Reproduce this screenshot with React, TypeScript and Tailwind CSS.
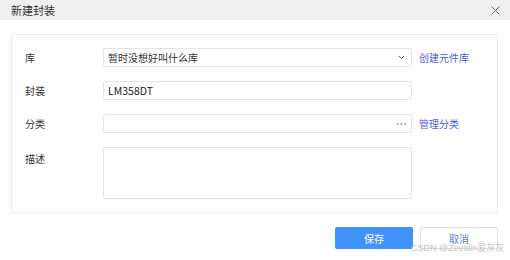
import React from 'react';

const font = { fontFamily: '"Noto Sans CJK SC", "Open Sans", sans-serif' };

const Row: React.FC<{ label: string; children: React.ReactNode; extra?: React.ReactNode; top?: boolean }> = ({ label, children, extra, top }) => (
    <div className={`flex ${top ? 'items-start' : 'items-center'}`}>
        <div className={`w-[78px] shrink-0 text-[10px] text-[#333] ${top ? 'pt-[4px]' : ''}`}>{label}</div>
        <div className="w-[309px] shrink-0">{children}</div>
        {extra && <div className="ml-[7px] text-[10px] text-[#4b5fd8]">{extra}</div>}
    </div>
);

const boxClass = 'h-[19px] w-full border border-[#e2e4ea] rounded-[2px] bg-white flex items-center px-[4px] text-[10px] text-[#333]';

export default function App() {
    return (
        <div className="relative w-[510px] h-[260px] bg-white overflow-hidden" style={font}>
            <div className="h-[20px] bg-[#f0f0f0] flex items-center justify-between pl-[11px] pr-[10px]">
                <span className="text-[11px] text-[#333]">新建封装</span>
                <svg width="9" height="9" viewBox="0 0 9 9" className="text-[#666]">
                    <path d="M0.5 0.5L8.5 8.5M8.5 0.5L0.5 8.5" stroke="currentColor" strokeWidth="1" />
                </svg>
            </div>

            <div className="mt-[14px] ml-[11px] mr-[12px] border border-[#ebebeb] pt-[13px] pb-[13px] pl-[13px] flex flex-col gap-[14px]">
                <Row label="库" extra="创建元件库">
                    <div className={`${boxClass} justify-between`}>
                        <span>暂时没想好叫什么库</span>
                        <svg width="7" height="5" viewBox="0 0 7 5" className="mr-[2px] text-[#555]">
                            <path d="M1 1L3.5 3.5L6 1" stroke="currentColor" strokeWidth="1" fill="none" />
                        </svg>
                    </div>
                </Row>
                <Row label="封装">
                    <div className={boxClass}>
                        <span className="text-[10.5px] text-[#222]">LM358DT</span>
                    </div>
                </Row>
                <Row label="分类" extra="管理分类">
                    <div className={`${boxClass} justify-end`}>
                        <svg width="9" height="2" viewBox="0 0 9 2" className="mr-[1px] text-[#888]">
                            <rect x="0" y="0" width="1.6" height="1.6" fill="currentColor" />
                            <rect x="3.6" y="0" width="1.6" height="1.6" fill="currentColor" />
                            <rect x="7.2" y="0" width="1.6" height="1.6" fill="currentColor" />
                        </svg>
                    </div>
                </Row>
                <Row label="描述" top>
                    <div className="h-[52px] w-full border border-[#e2e4ea] rounded-[2px] bg-white" />
                </Row>
            </div>

            <div className="mt-[14px] mr-[12px] flex justify-end gap-[7px]">
                <button className="w-[78px] h-[22px] rounded-[2px] bg-[#3f93fb] text-white text-[10px]">保存</button>
                <button className="w-[78px] h-[22px] rounded-[2px] border border-[#dcdfe6] bg-white text-[#5b7de8] text-[10px]">取消</button>
            </div>

            <div
                className="absolute left-[411px] top-[243px] text-[9px] leading-[11px] text-[#c4c4c4] whitespace-nowrap"
                style={{ fontFamily: '"Liberation Sans", "Noto Sans CJK SC", sans-serif' }}
            >
                CSDN @Zevalin爱灰灰
            </div>
        </div>
    );
}
